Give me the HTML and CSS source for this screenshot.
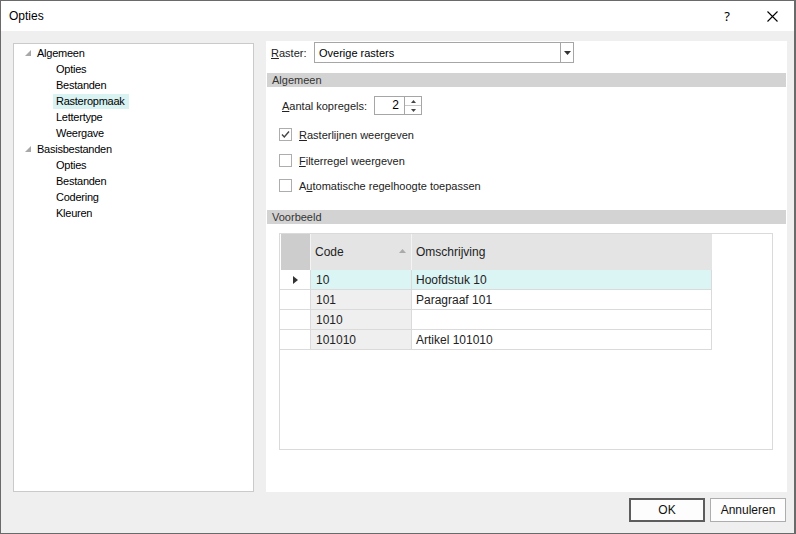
FILE: index.html
```html
<!DOCTYPE html>
<html>
<head>
<meta charset="utf-8">
<link rel="stylesheet" href="styles.css">
</head>
<body>
<div class="window">
  <div class="titlebar">
    <span class="title">Opties</span>
    <span class="help">?</span>
    <span class="close"><svg width="11" height="11" viewBox="0 0 11 11"><path d="M0.5 0.5 L10.5 10.5 M10.5 0.5 L0.5 10.5" stroke="#000" stroke-width="1.1" fill="none"/></svg></span>
  </div>
  <div class="client">
    <div class="main">
      <div class="tree">
        <div class="node"><svg class="exp" width="7" height="7" viewBox="0 0 7 7"><path d="M6 0 L6 6 L0 6 Z" fill="#a8a8a8"/></svg><span>Algemeen</span></div>
        <div class="leaf"><span>Opties</span></div>
        <div class="leaf"><span>Bestanden</span></div>
        <div class="leaf"><span class="sel">Rasteropmaak</span></div>
        <div class="leaf"><span>Lettertype</span></div>
        <div class="leaf"><span>Weergave</span></div>
        <div class="node"><svg class="exp" width="7" height="7" viewBox="0 0 7 7"><path d="M6 0 L6 6 L0 6 Z" fill="#a8a8a8"/></svg><span>Basisbestanden</span></div>
        <div class="leaf"><span>Opties</span></div>
        <div class="leaf"><span>Bestanden</span></div>
        <div class="leaf"><span>Codering</span></div>
        <div class="leaf"><span>Kleuren</span></div>
      </div>
      <div class="panel">
        <div class="rasterrow">
          <span class="lbl"><u>R</u>aster:</span>
          <div class="combo">
            <span class="combotext">Overige rasters</span>
            <span class="combobtn"><svg width="7" height="4" viewBox="0 0 7 4"><path d="M0 0 H7 L3.5 4 Z" fill="#333"/></svg></span>
          </div>
        </div>
        <div class="section">Algemeen</div>
        <div class="spinrow">
          <span class="lbl"><u>A</u>antal kopregels:</span>
          <div class="spin">
            <span class="spinval">2</span>
            <span class="spinbtns">
              <span class="sb"><svg width="5" height="3" viewBox="0 0 5 3"><path d="M2.5 0 L5 3 H0 Z" fill="#444"/></svg></span>
              <span class="sb"><svg width="5" height="3" viewBox="0 0 5 3"><path d="M0 0 H5 L2.5 3 Z" fill="#444"/></svg></span>
            </span>
          </div>
        </div>
        <div class="check c1"><span class="box"><svg width="11" height="11" viewBox="0 0 11 11"><path d="M2 5.5 L4.3 8 L9 2.5" stroke="#444" stroke-width="1.4" fill="none"/></svg></span><span class="lbl"><u>R</u>asterlijnen weergeven</span></div>
        <div class="check c2"><span class="box"></span><span class="lbl"><u>F</u>ilterregel weergeven</span></div>
        <div class="check c3"><span class="box"></span><span class="lbl">A<u>u</u>tomatische regelhoogte toepassen</span></div>
        <div class="section s2">Voorbeeld</div>
        <div class="gridbox">
          <div class="grid">
            <div class="hc corner"></div>
            <div class="hc code">Code<svg class="sort" width="7" height="4" viewBox="0 0 7 4"><path d="M3.5 0 L7 4 H0 Z" fill="#aaa"/></svg></div>
            <div class="hc desc">Omschrijving</div>

            <div class="rh"><svg width="5" height="8" viewBox="0 0 5 8"><path d="M0 0 L5 4 L0 8 Z" fill="#333"/></svg></div>
            <div class="c cc cur">10</div>
            <div class="c cd cur">Hoofdstuk 10</div>

            <div class="rh"></div>
            <div class="c cc">101</div>
            <div class="c cd">Paragraaf 101</div>

            <div class="rh"></div>
            <div class="c cc">1010</div>
            <div class="c cd"></div>

            <div class="rh"></div>
            <div class="c cc">101010</div>
            <div class="c cd">Artikel 101010</div>
          </div>
        </div>
      </div>
    </div>
    <div class="footer">
      <button class="btn def">OK</button>
      <button class="btn">Annuleren</button>
    </div>
  </div>
</div>
</body>
</html>
```

FILE: styles.css
```css
html, body {
  margin: 0;
  padding: 0;
  background: #efefef;
}
.window {
  width: 796px;
  height: 534px;
  box-sizing: border-box;
  border: 1px solid #6a6a6a;
  border-right-width: 2px;
  display: flex;
  flex-direction: column;
  font-family: "Liberation Sans", Arial, sans-serif;
  color: #000;
}
.titlebar {
  height: 30px;
  background: #fff;
  display: flex;
  align-items: center;
  padding-left: 8px;
  flex: none;
}
.title {
  font-size: 12px;
  flex: 1;
}
.help {
  font-family: "Noto Sans", sans-serif;
  font-size: 13px;
  width: 12px;
  margin-right: 34px;
  text-align: center;
}
.close {
  width: 11px;
  height: 11px;
  margin-right: 16px;
  display: flex;
}
.client {
  flex: 1;
  background: #efefef;
  display: flex;
  flex-direction: column;
}
.main {
  display: flex;
  padding: 10px 0 0 12px;
  gap: 12px;
  align-items: flex-start;
}
.tree {
  margin-top: 2px;
  width: 241px;
  height: 449px;
  box-sizing: border-box;
  border: 1px solid #cacaca;
  background: #fff;
  padding-top: 1px;
  font-size: 11px;
  letter-spacing: -0.25px;
}
.node, .leaf {
  height: 16px;
  display: flex;
  align-items: center;
}
.node .exp {
  margin-left: 11px;
  margin-right: 5px;
  margin-top: 1px;
}
.leaf span {
  margin-left: 39px;
  padding: 0 4px 0 3px;
  line-height: 15px;
}
.leaf span.sel {
  background: #d9f3f3;
}
.panel {
  width: 521px;
  height: 451px;
  background: #fff;
  display: flex;
  flex-direction: column;
  font-size: 11px;
}
.rasterrow {
  display: flex;
  align-items: center;
  margin-top: 1px;
  height: 21px;
}
.rasterrow .lbl {
  width: 43px;
  padding-left: 5px;
  color: #222;
}
.combo {
  width: 260px;
  height: 21px;
  box-sizing: border-box;
  border: 1px solid #a6a6a6;
  display: flex;
  align-items: center;
}
.combotext {
  flex: 1;
  padding-left: 4px;
}
.combobtn {
  width: 12px;
  height: 19px;
  border-left: 1px solid #a6a6a6;
  display: flex;
  align-items: center;
  justify-content: center;
}
.section {
  margin: 10px 1px 0 1px;
  height: 14px;
  line-height: 14px;
  background: #d3d3d3;
  color: #333;
  padding-left: 5px;
}
.section.s2 {
  margin-top: 18px;
}
.spinrow {
  display: flex;
  align-items: center;
  margin-top: 9px;
  padding-left: 16px;
}
.spinrow .lbl {
  width: 92px;
  color: #222;
}
.spin {
  width: 48px;
  height: 19px;
  box-sizing: border-box;
  border: 1px solid #a6a6a6;
  display: flex;
}
.spinval {
  flex: 1;
  text-align: right;
  padding-right: 5px;
  font-size: 12px;
  line-height: 17px;
}
.spinbtns {
  width: 16px;
  border-left: 1px solid #a6a6a6;
  display: flex;
  flex-direction: column;
}
.sb {
  flex: 1;
  display: flex;
  align-items: center;
  justify-content: center;
}
.sb + .sb {
  border-top: 1px solid #c8c8c8;
}
.check {
  display: flex;
  align-items: center;
  padding-left: 13px;
  height: 13px;
}
.check.c1 { margin-top: 13px; }
.check.c2 { margin-top: 13px; }
.check.c3 { margin-top: 12px; }
.box {
  width: 13px;
  height: 13px;
  box-sizing: border-box;
  border: 1px solid #adadad;
  display: flex;
  align-items: center;
  justify-content: center;
  margin-right: 7px;
}
.check .lbl {
  color: #222;
  padding-top: 1px;
}
.gridbox {
  margin: 9px 0 0 13px;
  width: 494px;
  height: 217px;
  box-sizing: border-box;
  border: 1px solid #dadada;
  background: #fff;
}
.grid {
  display: grid;
  grid-template-columns: 31px 101px 300px;
  grid-template-rows: 36px repeat(4, 20px);
  font-size: 12px;
  color: #222;
}
.hc {
  box-sizing: border-box;
  background: #e4e4e4;
  border-right: 1px solid #f4f4f4;
  display: flex;
  align-items: center;
}
.hc.corner {
  background: #cdcdcd;
  border-left: 1px solid #fff;
}
.hc.code {
  padding-left: 4px;
  justify-content: space-between;
  padding-right: 5px;
}
.hc.desc {
  padding-left: 4px;
  border-right: none;
}
.sort {
  margin-top: -2px;
}
.rh, .c {
  box-sizing: border-box;
  border-right: 1px solid #dadada;
  border-bottom: 1px solid #dadada;
  display: flex;
  align-items: center;
}
.rh {
  background: #fff;
  padding-left: 13px;
}
.c {
  padding-left: 5px;
  padding-top: 1px;
}
.cc {
  background: #efefef;
}
.cd {
  background: #fff;
  padding-left: 4px;
}
.c.cur {
  background: #dbf4f4;
}
.footer {
  display: flex;
  justify-content: flex-end;
  gap: 5px;
  padding: 6px 8px 0 0;
}
.btn {
  width: 76px;
  height: 24px;
  box-sizing: border-box;
  border: 1px solid #adadad;
  background: #fdfdfd;
  font-family: "Liberation Sans", Arial, sans-serif;
  font-size: 12px;
  color: #111;
  padding: 0;
  margin: 0;
}
.btn.def {
  border: 2px solid #5d5d5d;
}
```
